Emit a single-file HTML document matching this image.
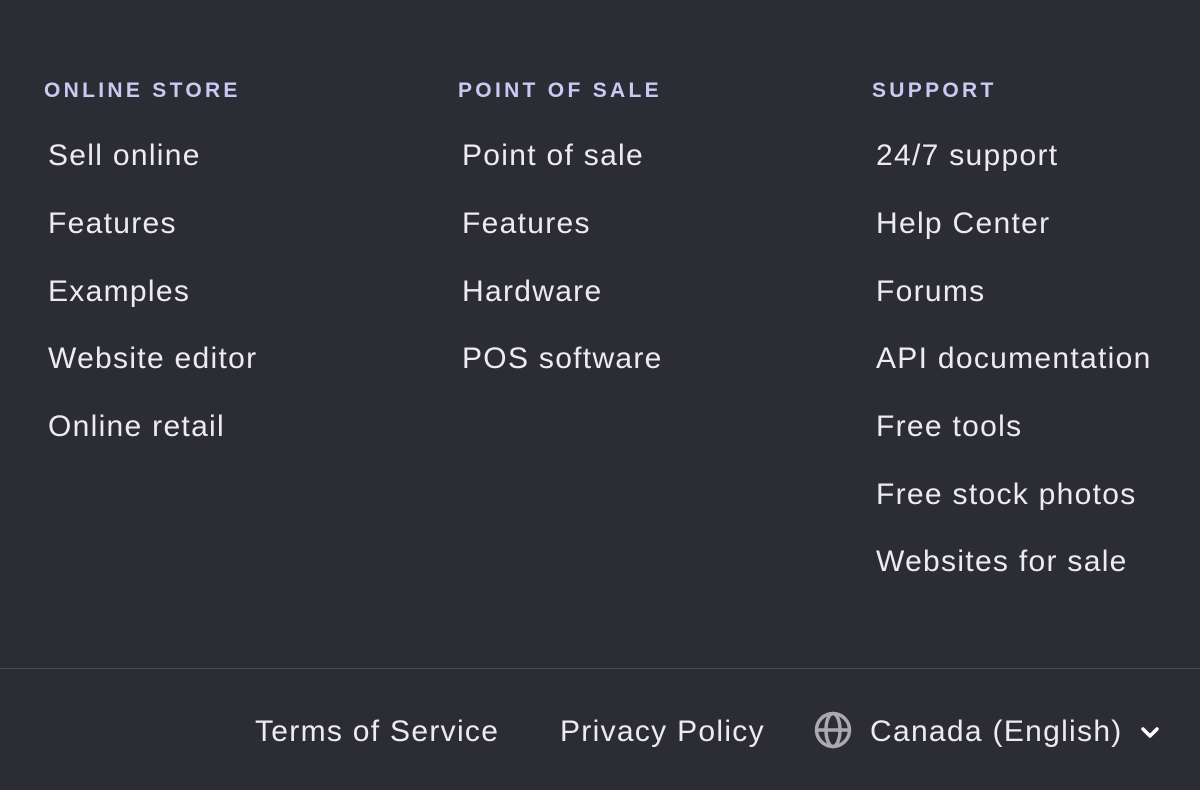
<!DOCTYPE html>
<html><head><meta charset="utf-8"><style>
html,body{margin:0;padding:0}
body{width:1200px;height:790px;background:#2c2c35;position:relative;overflow:hidden;font-family:"Liberation Sans",sans-serif}
.h{position:absolute;top:80px;font-size:21px;line-height:1;font-weight:bold;letter-spacing:3.3px;color:#c9c9f4}
.l{position:absolute;font-size:30px;line-height:1;color:#ececee;letter-spacing:1.3px;white-space:nowrap}
.div{position:absolute;left:0;top:668px;width:1200px;height:1px;background:#4a4a54}
</style></head><body>
<div class="h" style="left:44px">ONLINE STORE</div>
<div class="h" style="left:458px">POINT OF SALE</div>
<div class="h" style="left:872px">SUPPORT</div>

<div class="l" style="left:48px;top:141px">Sell online</div>
<div class="l" style="left:48px;top:209px">Features</div>
<div class="l" style="left:48px;top:277px">Examples</div>
<div class="l" style="left:48px;top:344px">Website editor</div>
<div class="l" style="left:48px;top:412px">Online retail</div>

<div class="l" style="left:462px;top:141px">Point of sale</div>
<div class="l" style="left:462px;top:209px">Features</div>
<div class="l" style="left:462px;top:277px">Hardware</div>
<div class="l" style="left:462px;top:344px">POS software</div>

<div class="l" style="left:876px;top:141px">24/7 support</div>
<div class="l" style="left:876px;top:209px">Help Center</div>
<div class="l" style="left:876px;top:277px">Forums</div>
<div class="l" style="left:876px;top:344px">API documentation</div>
<div class="l" style="left:876px;top:412px">Free tools</div>
<div class="l" style="left:876px;top:480px">Free stock photos</div>
<div class="l" style="left:876px;top:547px">Websites for sale</div>

<div class="div"></div>
<div class="l" style="left:255px;top:717px">Terms of Service</div>
<div class="l" style="left:560px;top:717px">Privacy Policy</div>
<svg style="position:absolute;left:814px;top:711px" width="38" height="38" viewBox="0 0 38 38" fill="none" stroke="#a9a9ae" stroke-width="3.5">
<circle cx="19" cy="19" r="16.5"/>
<ellipse cx="19" cy="19" rx="7" ry="16.5"/>
<line x1="2.5" y1="19" x2="35.5" y2="19"/>
</svg>
<div class="l" style="left:870px;top:717px">Canada (English)</div>
<svg style="position:absolute;left:1140px;top:726px" width="20" height="14" viewBox="0 0 20 14" fill="none" stroke="#fff" stroke-width="3.5" stroke-linecap="round" stroke-linejoin="round">
<path d="M3 3 L10 10 L17 3"/>
</svg>
</body></html>
